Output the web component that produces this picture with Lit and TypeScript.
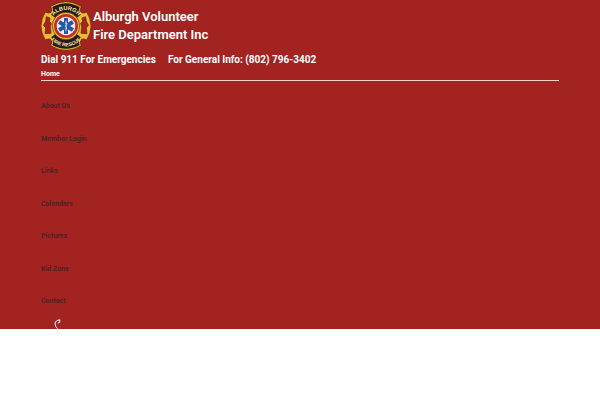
import { LitElement, html, css } from "lit";
import { customElement } from "lit/decorators.js";

@customElement("fire-badge")
class FireBadge extends LitElement {
  static styles = css`
    :host { display: block; }
    .badge { display: block; width: 50px; height: 50px; }
    .arc { font: 700 17px "Liberation Sans", Arial, sans-serif; fill: #fbe9a0; text-anchor: middle; }
    .lower { font-size: 15px; }
  `;
  render() {
    return html`
      <svg class="badge" viewBox="15 3 150 150" role="img" aria-label="Alburgh Fire Rescue">
        <defs>
          <path id="top" d="M42 78 A48 48 0 0 1 138 78" />
          <path id="bottom" d="M29 78 A61 61 0 0 0 151 78" />
        </defs>
        <path
          d="M44 19 Q90 -9 136 19 Q130 31 135 37 Q142 42 152 36 Q178 78 152 120 Q142 114 135 119 Q130 125 136 137 Q90 165 44 137 Q50 125 45 119 Q38 114 28 120 Q2 78 28 36 Q38 42 45 37 Q50 31 44 19Z"
          fill="#f0b92f" stroke="#4c2013" stroke-width="2" />
        <path d="M49 21 Q90 -2 131 21 Q126 32 134 44 L122 54 Q90 22 58 54 L46 44 Q54 32 49 21Z" fill="#25191b" />
        <path d="M49 135 Q90 158 131 135 Q126 124 134 112 L122 102 Q90 134 58 102 L46 112 Q54 124 49 135Z" fill="#25191b" />
        <path d="M31 50 L42 54 L40 64 L46 70 L43 80 L45 100 L27 101 L29 83 L22 76 L29 64Z" fill="#a3261c" stroke="#5d2218" stroke-width="2" />
        <path d="M149 50 L138 54 L140 64 L134 70 L137 80 L135 100 L153 101 L151 83 L158 76 L151 64Z" fill="#a3261c" stroke="#5d2218" stroke-width="2" />
        <circle cx="90" cy="78" r="41" fill="#f0c541" stroke="#4c2013" stroke-width="2" />
        <circle cx="90" cy="78" r="36" fill="#c22c28" />
        <circle cx="90" cy="78" r="28" fill="#f0eeee" />
        <g fill="#2356a5">
          <rect x="84" y="54" width="12" height="48" />
          <rect x="84" y="54" width="12" height="48" transform="rotate(60 90 78)" />
          <rect x="84" y="54" width="12" height="48" transform="rotate(120 90 78)" />
        </g>
        <path d="M90 62V94M87 70Q96 67 92 74Q85 78 91 82Q95 86 88 90" fill="none" stroke="#fff" stroke-width="2" />
        <text class="arc"><textPath href="#top" startOffset="50%">ALBURGH</textPath></text>
        <text class="arc lower"><textPath href="#bottom" startOffset="50%">FIRE RESCUE</textPath></text>
      </svg>
    `;
  }
}

@customElement("app-root")
class AppRoot extends LitElement {
  static styles = css`
    :host { display: block; font-family: Roboto, "Liberation Sans", sans-serif; }
    .header { background: #a2231f; color: #fff; padding: 1px 41px 0; }
    .brand { display: flex; align-items: flex-start; gap: 2px; }
    .name { margin: 0; padding-top: 7px; font-size: 13px; line-height: 18px; font-weight: 600; }
    .line { display: block; }
    .info { display: flex; gap: 12px; margin: 0; font-size: 10px; line-height: 17px; font-weight: 700; }
    .menu { list-style: none; margin: 0; padding: 0; display: grid; grid-template-rows: repeat(7, 1fr) 24px; min-height: 251px; }
    .link { display: block; font-size: 7px; line-height: 12px; font-weight: 700; color: #4d2424; text-decoration: none; }
    .current { color: #fff; border-bottom: 1px solid #f3d3cf; }
    .call { display: block; width: 8px; height: 10px; margin-left: 13px; overflow: hidden; }
    .phone { display: block; width: 8px; height: 10px; }
    .phone-shape { fill: none; stroke: #fff; stroke-linecap: round; stroke-linejoin: round; }
  `;
  private links = ["Home", "About Us", "Member Login", "Links", "Calendars", "Pictures", "Kid Zone", "Contact"];
  render() {
    return html`
      <header class="header">
        <div class="brand">
          <fire-badge></fire-badge>
          <h1 class="name">
            <span class="line">Alburgh Volunteer</span>
            <span class="line">Fire Department Inc</span>
          </h1>
        </div>
        <p class="info"><span>Dial 911 For Emergencies</span><span>For General Info: (802) 796-3402</span></p>
        <nav>
          <ul class="menu">
            ${this.links.map((name, i) => html`
              <li><a class="link ${i === 0 ? "current" : ""}" href="#">${name}</a></li>
            `)}
          </ul>
        </nav>
        <a class="call" href="tel:8027963402" aria-label="Call us">
          <svg class="phone" viewBox="0 0 8 10">
            <path class="phone-shape" d="M6 1Q1 1 1 5Q1 8 4 10" stroke-width="1" />
            <path class="phone-shape" d="M5 1L6 3L4 4" stroke-width="1" />
          </svg>
        </a>
      </header>
    `;
  }
}
